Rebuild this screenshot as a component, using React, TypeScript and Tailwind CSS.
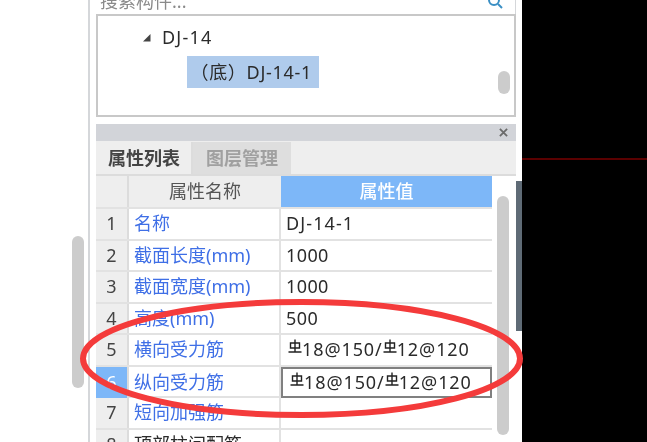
const rows = [
  { n: '1', name: '名称', value: 'DJ-14-1', track: 'tracking-[1.1px]' },
  { n: '2', name: '截面长度(mm)', value: '1000', track: 'tracking-[0.4px]' },
  { n: '3', name: '截面宽度(mm)', value: '1000', track: 'tracking-[0.4px]' },
  { n: '4', name: '高度(mm)', value: '500', track: 'tracking-[0.4px]' },
  { n: '5', name: '横向受力筋', rebar: true },
  { n: '6', name: '纵向受力筋', rebar: true, active: true },
  { n: '7', name: '短向加强筋' },
];

function RebarMark() {
  return (
    <svg viewBox="0 0 14 15" className="inline-block h-[15px] w-[14px] -translate-y-[3px]" fill="none" stroke="#222" strokeWidth="1.4">
      <path d="M2.5 4h9v5h-9zM7 0.5v12.5M0.5 13h13" />
    </svg>
  );
}

function RebarValue() {
  return (
    <span className="flex items-center pl-[2px] tracking-[0.9px]">
      <RebarMark />18@150/
      <RebarMark />12@120
    </span>
  );
}

export default function App() {
  return (
    <div className="relative flex h-[442px] w-[647px] overflow-hidden bg-white text-[18px] text-[#2b2b2b] blur-[0.5px] [font-family:'Noto_Sans','Noto_Sans_CJK_SC',sans-serif]">
      {/* left gutter */}
      <div className="flex h-full w-[90px] shrink-0 justify-end border-r-2 border-[#d5d7da] pr-[4px] pt-[236px]">
        <div className="h-[152px] w-[12px] rounded-full bg-[#cccccc]" />
      </div>

      {/* main panel */}
      <div className="flex h-full w-[426px] shrink-0 flex-col pl-[6px]">
        <div className="relative h-[14px] shrink-0 overflow-hidden border-r border-[#d5d7da]">
          <div className="-mt-[11px] pl-[4px] leading-[24px] text-[#8a8a8a]">搜索构件...</div>
          <svg viewBox="0 0 16 16" className="absolute right-[12px] -top-[7px] h-[16px] w-[16px]" fill="none" stroke="#3a8fc4" strokeWidth="2">
            <circle cx="7" cy="7" r="5" />
            <path d="M11 11l4 4" />
          </svg>
        </div>

        {/* tree */}
        <div className="flex h-[103px] shrink-0 border-2 border-[#c8c8c8]">
          <div className="flex-1 pl-[44px] pt-[8px]">
            <div className="flex h-[26px] items-center">
              <svg viewBox="0 0 9 9" className="mr-[11px] h-[9px] w-[9px]">
                <path d="M8.5 1v7.5h-7.5z" fill="#444" />
              </svg>
              <span className="leading-none tracking-[1.2px]">DJ-14</span>
            </div>
            <div className="ml-[45px] mt-[6px] flex h-[32px] w-[132px] items-center justify-end whitespace-nowrap bg-[#afcbec] pr-[7px] leading-none tracking-[0.7px]">
              （底）DJ-14-1
            </div>
          </div>
          <div className="w-[16px] shrink-0 pt-[55px]">
            <div className="h-[23px] w-[12px] rounded-full bg-[#cccccc]" />
          </div>
        </div>

        {/* properties */}
        <div className="mt-[7px] flex h-[17px] shrink-0 items-center justify-end bg-[#d2d4d9] pr-[8px]">
          <svg viewBox="0 0 10 10" className="h-[9px] w-[9px]" stroke="#6b6b6b" strokeWidth="2">
            <path d="M1 1l8 8M9 1l-8 8" />
          </svg>
        </div>
        <div className="flex h-[33px] shrink-0 items-stretch bg-[#eeeeee] pt-[1px]">
          <div className="flex w-[97px] items-center justify-center border-r-2 border-[#dcdcdc] pl-[1px] font-bold text-[#444]">属性列表</div>
          <div className="flex w-[98px] items-center justify-center bg-[#dedede] font-bold text-[#a0a0a0]">图层管理</div>
        </div>
        <div className="flex min-h-0 flex-1 border-t-2 border-[#dcdcdc]">
          <div className="w-[396px] shrink-0">
            <div className="grid h-[31px] grid-cols-[33px_152px_211px] bg-[#eeeeee]">
              <div className="border-r-2 border-[#dcdcdc]" />
              <div className="flex items-center justify-center text-[#555]">属性名称</div>
              <div className="flex items-center justify-center bg-[#7db7f8] font-medium text-white">属性值</div>
            </div>
            {rows.map((row) => (
              <div key={row.n} className="grid h-[31.5px] grid-cols-[33px_152px_211px] border-t-2 border-[#e2e2e2]">
                <div className={`flex items-center justify-center border-r-2 border-[#dcdcdc] ${row.active ? 'bg-[#7db7f8] text-white' : 'bg-[#eeeeee] text-[#444]'}`}>{row.n}</div>
                <div className="flex items-center whitespace-nowrap border-r-2 border-[#e2e2e2] pl-[5px] text-[#3f6fe6]">{row.name}</div>
                <div className={`flex items-center whitespace-nowrap pl-[5px] ${row.active ? 'border-2 border-[#808080]' : ''}`}>
                  {row.rebar ? <RebarValue /> : <span className={row.track}>{row.value}</span>}
                </div>
              </div>
            ))}
            <div className="grid h-[40px] grid-cols-[33px_152px_211px] border-t-2 border-[#e2e2e2]">
              <div className="flex justify-center border-r-2 border-[#dcdcdc] bg-[#eeeeee] pt-[2px] leading-[24px] text-[#444]">8</div>
              <div className="whitespace-nowrap border-r-2 border-[#e2e2e2] pl-[5px] pt-[2px] leading-[24px]">顶部柱间配筋</div>
              <div />
            </div>
          </div>
          <div className="flex-1 pl-[5px] pt-[20px]">
            <div className="h-[239px] w-[12px] rounded-full bg-[#cccccc]" />
          </div>
        </div>
      </div>

      {/* right strip + canvas */}
      <div className="flex h-full w-[6px] shrink-0 flex-col pt-[181px]">
        <div className="h-[150px] bg-[#5f6b76]" />
      </div>
      <div className="flex-1 bg-black pt-[158px]">
        <div className="h-[2px] bg-[#5a0000]" />
      </div>

      {/* red annotation */}
      <svg viewBox="0 0 647 442" className="absolute inset-0 h-[442px] w-[647px]" fill="none">
        <ellipse cx="301.5" cy="358.5" rx="218.5" ry="56.5" stroke="#f43b3b" strokeWidth="6" />
      </svg>
    </div>
  );
}
